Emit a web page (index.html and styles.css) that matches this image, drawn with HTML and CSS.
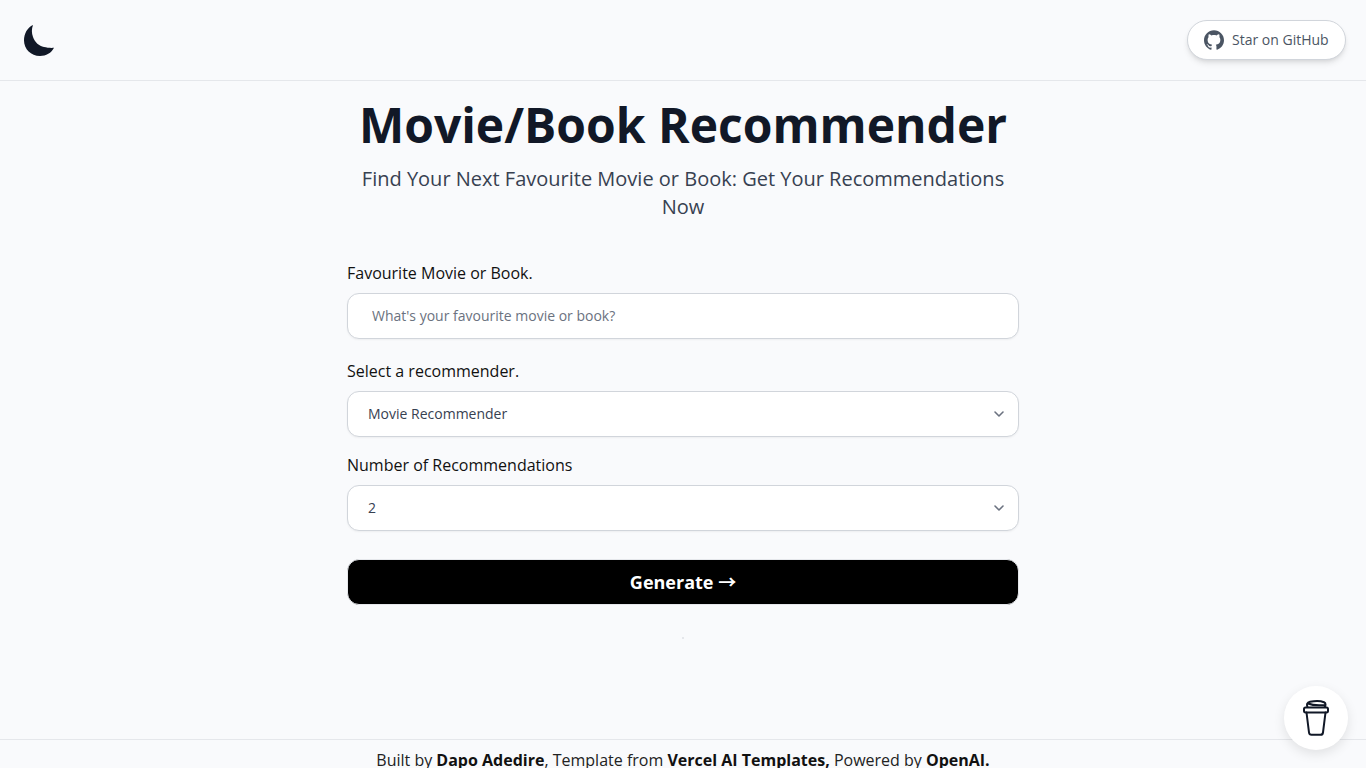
FILE: index.html
```html
<!DOCTYPE html>
<html lang="en">
<head>
<meta charset="UTF-8">
<meta name="viewport" content="width=device-width, initial-scale=1.0">
<title>Movie/Book Recommender</title>
<link rel="stylesheet" href="styles.css">
</head>
<body>
<header class="header">
  <svg class="moon" viewBox="0 0 30 31" aria-hidden="true">
    <path d="M9 0 C7.5 4 7.5 8 9 12 C11 17.5 15 21 20 22 C23 22.7 27 23.2 30 22.8 C27.5 28 22 31 16 31 C7 31 0 24 0 15.5 C0 8.5 3.5 2.5 9 0 Z"/>
  </svg>
  <a class="github" href="#">
    <svg class="github-icon" viewBox="0 0 24 24" aria-hidden="true">
      <path d="M12 .297c-6.63 0-12 5.373-12 12 0 5.303 3.438 9.8 8.205 11.385.6.113.82-.258.82-.577 0-.285-.01-1.04-.015-2.04-3.338.724-4.042-1.61-4.042-1.61C4.422 18.07 3.633 17.7 3.633 17.7c-1.087-.744.084-.729.084-.729 1.205.084 1.838 1.236 1.838 1.236 1.07 1.835 2.809 1.305 3.495.998.108-.776.417-1.305.76-1.605-2.665-.3-5.466-1.332-5.466-5.93 0-1.31.465-2.38 1.235-3.22-.135-.303-.54-1.523.105-3.176 0 0 1.005-.322 3.3 1.23.96-.267 1.98-.399 3-.405 1.02.006 2.04.138 3 .405 2.28-1.552 3.285-1.23 3.285-1.23.645 1.653.24 2.873.12 3.176.765.84 1.23 1.91 1.23 3.22 0 4.61-2.805 5.625-5.475 5.92.42.36.81 1.096.81 2.22 0 1.606-.015 2.896-.015 3.286 0 .315.21.69.825.57C20.565 22.092 24 17.592 24 12.297c0-6.627-5.373-12-12-12"/>
    </svg>
    <span class="github-text">Star on GitHub</span>
  </a>
</header>

<main class="main">
  <h1 class="title">Movie/Book Recommender</h1>
  <p class="subtitle">Find Your Next Favourite Movie or Book: Get Your Recommendations Now</p>

  <form class="form">
    <label class="label" for="title">Favourite Movie or Book.</label>
    <input class="input" id="title" type="text" placeholder="What's your favourite movie or book?">

    <label class="label label-first" for="kind">Select a recommender.</label>
    <select class="select" id="kind">
      <option>Movie Recommender</option>
      <option>Book Recommender</option>
    </select>

    <label class="label label-second" for="count">Number of Recommendations</label>
    <select class="select" id="count">
      <option>2</option>
      <option>4</option>
      <option>6</option>
    </select>

    <button class="generate" type="button">Generate <span class="arrow">&rarr;</span></button>
  </form>

  <div class="dot"></div>
</main>

<footer class="footer">
  Built by <b>Dapo Adedire</b>, Template from <b>Vercel AI Templates,</b> Powered by <b>OpenAI.</b>
</footer>

<a class="coffee" href="#" aria-label="Buy me a coffee">
  <svg viewBox="0 0 26 36" width="26" height="36" aria-hidden="true">
    <path class="cup" d="M3.5 12.5 L6 32.5 C6.2 34 7 34.8 8.5 34.8 H17.5 C19 34.8 19.8 34 20 32.5 L22.5 12.5"/>
    <path class="cup" d="M2.5 7.5 H23.5 C24.6 7.5 25 8 25 9 V10.8 C25 11.8 24.6 12.4 23.5 12.4 H2.5 C1.4 12.4 1 11.8 1 10.8 V9 C1 8 1.4 7.5 2.5 7.5 Z"/>
    <path class="cup" d="M4.5 7 C3.5 4.5 4 2.5 7 1.8 C11 1 18 1 21 2.2 C22.5 3 22.8 5 21.8 7 M5 3.5 C10 5.5 16 5.5 21.5 5"/>
  </svg>
</a>
</body>
</html>
```

FILE: styles.css
```css
* {
  box-sizing: border-box;
}

body {
  margin: 0;
  background-color: #f9fafc;
  color: #000;
  font-family: "Open Sans", sans-serif;
  font-size: 16px;
}

.header {
  display: flex;
  justify-content: space-between;
  align-items: center;
  height: 81px;
  padding: 0 20px 0 24px;
  border-bottom: 1px solid #e5e7eb;
}

.moon {
  width: 30px;
  height: 31px;
  margin-top: 1px;
  fill: #111827;
}

.github {
  display: flex;
  align-items: center;
  gap: 8px;
  width: 159px;
  height: 40px;
  padding-left: 16px;
  border: 1px solid #d1d5db;
  border-radius: 20px;
  background-color: #fff;
  box-shadow: 0 4px 6px -1px rgba(0, 0, 0, 0.1), 0 2px 4px -2px rgba(0, 0, 0, 0.1);
  color: #4b5563;
  font-size: 14px;
  text-decoration: none;
}

.github-icon {
  width: 20px;
  height: 20px;
  fill: #4b5563;
}

.github-text {
  padding-bottom: 2px;
}

.main {
  display: flex;
  flex-direction: column;
  align-items: center;
  min-height: 658px;
  padding-top: 20px;
}

.title {
  margin: 0;
  color: #111827;
  font-size: 48px;
  font-weight: 700;
  line-height: 48px;
}

.subtitle {
  width: 672px;
  margin: 16px 0 0;
  color: #374151;
  font-size: 20px;
  line-height: 28px;
  text-align: center;
}

.form {
  display: flex;
  flex-direction: column;
  width: 672px;
  margin-top: 40px;
}

.label {
  line-height: 24px;
  color: #111;
}

.label-first {
  margin-top: 20px;
}

.label-second {
  margin-top: 16px;
}

.input,
.select {
  width: 100%;
  height: 46px;
  margin-top: 8px;
  border: 1px solid #d1d5db;
  border-radius: 12px;
  background-color: #fff;
  box-shadow: 0 1px 2px rgba(0, 0, 0, 0.05);
  color: #374151;
  font-family: inherit;
  font-size: 14px;
}

.input {
  padding: 0 24px 2px;
}

.input::placeholder {
  color: #6b7280;
}

.select {
  padding: 0 40px 2px 20px;
  appearance: none;
  background-image: url("data:image/svg+xml,%3Csvg xmlns='http://www.w3.org/2000/svg' viewBox='0 0 20 20' fill='none'%3E%3Cpath stroke='%236b7280' stroke-linecap='round' stroke-linejoin='round' stroke-width='1.6' d='M6 8l4 4 4-4'/%3E%3C/svg%3E");
  background-repeat: no-repeat;
  background-position: right 9px center;
  background-size: 20px 20px;
}

.generate {
  height: 46px;
  margin-top: 28px;
  padding-bottom: 3px;
  border: 1px solid #e5e7eb;
  border-radius: 12px;
  background-color: #000;
  color: #fff;
  font-family: inherit;
  font-size: 18px;
  font-weight: 700;
  cursor: pointer;
}

.arrow {
  font-family: "Noto Sans CJK SC", sans-serif;
  font-weight: 700;
}

.dot {
  width: 2px;
  height: 2px;
  margin-top: 32px;
  background-color: #e5e7eb;
}

.footer {
  padding: 8px 0;
  border-top: 1px solid #e5e7eb;
  line-height: 24px;
  text-align: center;
  color: #222;
}

.footer b {
  color: #111;
  font-weight: 700;
}

.coffee {
  position: fixed;
  right: 18px;
  bottom: 18px;
  display: flex;
  justify-content: center;
  align-items: center;
  width: 64px;
  height: 64px;
  border-radius: 50%;
  background-color: #fff;
  box-shadow: 0 4px 12px rgba(0, 0, 0, 0.1);
}

.cup {
  fill: none;
  stroke: #111827;
  stroke-width: 2;
  stroke-linecap: round;
  stroke-linejoin: round;
}
```
